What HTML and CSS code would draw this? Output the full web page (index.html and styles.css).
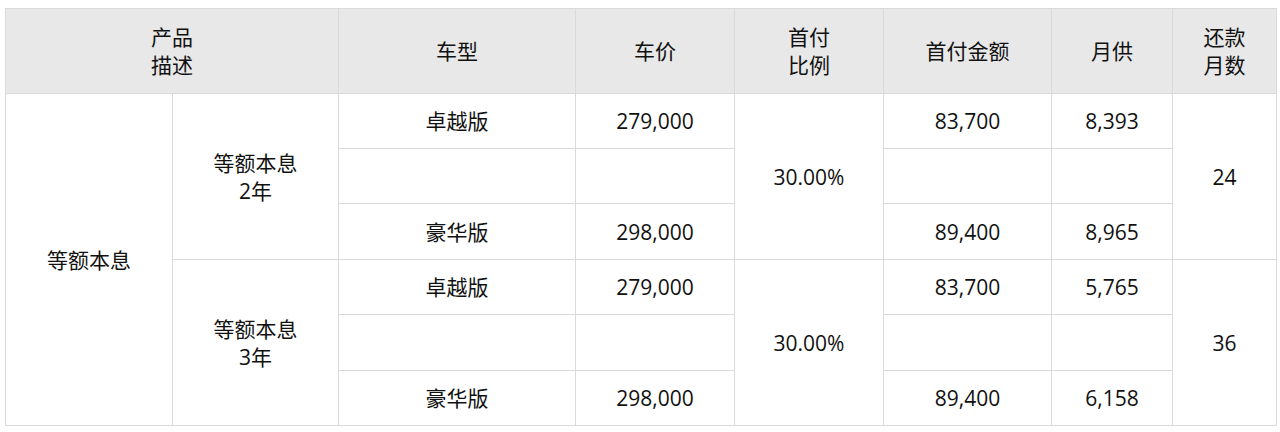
FILE: index.html
```html
<!DOCTYPE html>
<html lang="zh">
<head>
<meta charset="utf-8">
<link rel="stylesheet" href="styles.css">
</head>
<body>
<div class="wrap">
<table class="loan">
  <colgroup>
    <col class="c1"><col class="c2"><col class="c3"><col class="c4"><col class="c5"><col class="c6"><col class="c7"><col class="c8">
  </colgroup>
  <thead>
    <tr class="head">
      <th colspan="2">产品<br>描述</th>
      <th>车型</th>
      <th>车价</th>
      <th>首付<br>比例</th>
      <th>首付金额</th>
      <th>月供</th>
      <th>还款<br>月数</th>
    </tr>
  </thead>
  <tbody>
    <tr class="r55">
      <td rowspan="6">等额本息</td>
      <td rowspan="3">等额本息<br>2年</td>
      <td>卓越版</td>
      <td>279,000</td>
      <td rowspan="3">30.00%</td>
      <td>83,700</td>
      <td>8,393</td>
      <td rowspan="3">24</td>
    </tr>
    <tr class="r55">
      <td></td><td></td><td></td><td></td>
    </tr>
    <tr class="r56">
      <td>豪华版</td>
      <td>298,000</td>
      <td>89,400</td>
      <td>8,965</td>
    </tr>
    <tr class="r55">
      <td rowspan="3">等额本息<br>3年</td>
      <td>卓越版</td>
      <td>279,000</td>
      <td rowspan="3">30.00%</td>
      <td>83,700</td>
      <td>5,765</td>
      <td rowspan="3">36</td>
    </tr>
    <tr class="r56">
      <td></td><td></td><td></td><td></td>
    </tr>
    <tr class="r55">
      <td>豪华版</td>
      <td>298,000</td>
      <td>89,400</td>
      <td>6,158</td>
    </tr>
  </tbody>
</table>
</div>
</body>
</html>
```

FILE: styles.css
```css
html, body {
  margin: 0;
  padding: 0;
  background: #ffffff;
}
.wrap {
  padding: 8px 0 0 5px;
}
.loan {
  border-collapse: collapse;
  table-layout: fixed;
  width: 1271px;
  font-family: "Open Sans", "Noto Sans CJK SC", sans-serif;
  font-size: 21px;
  line-height: 28px;
  color: #111111;
}
.c1 { width: 167px; }
.c2 { width: 166px; }
.c3 { width: 237px; }
.c4 { width: 159px; }
.c5 { width: 149px; }
.c6 { width: 168px; }
.c7 { width: 121px; }
.c8 { width: 104px; }
.loan th,
.loan td {
  border: 1px solid #dadada;
  text-align: center;
  vertical-align: middle;
  padding: 0;
  font-weight: normal;
}
.head { height: 85px; }
.head th { background: #e8e8e8; }
.r55 { height: 55px; }
.r56 { height: 56px; }
```
